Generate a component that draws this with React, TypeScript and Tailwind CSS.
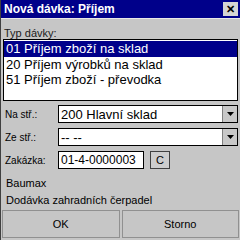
import React, { useState } from 'react';

const items = [
    "01 Příjem zboží na sklad",
    "20 Příjem výrobků na sklad",
    "51 Příjem zboží - převodka",
];

const Arrow = () => (
    <div className="w-[15px] h-full bg-[#c8c8c8] border-l border-[#808080] flex items-center justify-center">
        <svg width="7" height="4" viewBox="0 0 7 4"><path d="M0 0h7L3.5 4z" fill="#000" /></svg>
    </div>
);

const Combo = ({ value }: { value: string }) => (
    <div className="flex-1 h-[18px] bg-white border border-black flex items-center">
        <span className="flex-1 pl-[2px] text-[13px] leading-none text-black">{value}</span>
        <Arrow />
    </div>
);

const App = () => {
    const [sel, setSel] = useState(0);

    return (
        <div className="w-[240px] h-[240px] bg-[#c6c6c6] flex flex-col font-['Liberation_Sans',sans-serif] border-l border-[#404040]">
            <div className="h-[18px] bg-[#00008a] flex items-center justify-between pl-[3px] pr-[2px]">
                <span className="text-white font-bold text-[12px]">Nová dávka: Příjem</span>
                <button className="w-[15px] h-[14px] bg-[#d4d4d4] text-[11px] font-bold leading-none flex items-center justify-center">✕</button>
            </div>
            <div className="h-[1px] bg-[#e8e8e8]" />
            <div className="px-[3px] pt-[6px] text-[11px] text-[#202020] h-[20px]">Typ dávky:</div>
            <div className="mx-[2px] h-[62px] bg-white border border-black flex flex-col pt-[1px]">
                {items.map((it, i) => (
                    <div key={it} onClick={() => setSel(i)}
                        className={"h-[15.5px] pl-[2px] text-[13px] leading-[15.5px] " + (i === sel ? "bg-[#00008a] text-white" : "text-black")}>
                        {it}
                    </div>
                ))}
            </div>
            <div className="flex flex-col gap-[5px] mt-[4px] px-[2px]">
                <div className="flex items-center">
                    <span className="w-[55px] pl-[2px] text-[10px]">Na stř.:</span>
                    <Combo value="200 Hlavní sklad" />
                </div>
                <div className="flex items-center">
                    <span className="w-[55px] pl-[2px] text-[10px]">Ze stř.:</span>
                    <Combo value="-- --" />
                </div>
                <div className="flex items-center">
                    <span className="w-[55px] pl-[2px] text-[10px]">Zakázka:</span>
                    <div className="w-[86px] h-[18px] bg-white border border-black flex items-center pl-[2px] text-[12px]">01-4-0000003</div>
                    <button className="ml-[6px] w-[20px] h-[18px] bg-[#cdcdcd] border border-[#404040] text-[11px]">C</button>
                </div>
            </div>
            <div className="px-[5px] mt-[6px] text-[11px] leading-[17px]">
                <div>Baumax</div>
                <div>Dodávka zahradních čerpadel</div>
            </div>
            <div className="flex gap-[2px] px-[1px] mt-auto mb-[2px]">
                <button className="flex-1 h-[28px] border border-[#909090] text-[11px]">OK</button>
                <button className="flex-1 h-[28px] border border-[#909090] text-[11px]">Storno</button>
            </div>
        </div>
    );
};

export default App;
